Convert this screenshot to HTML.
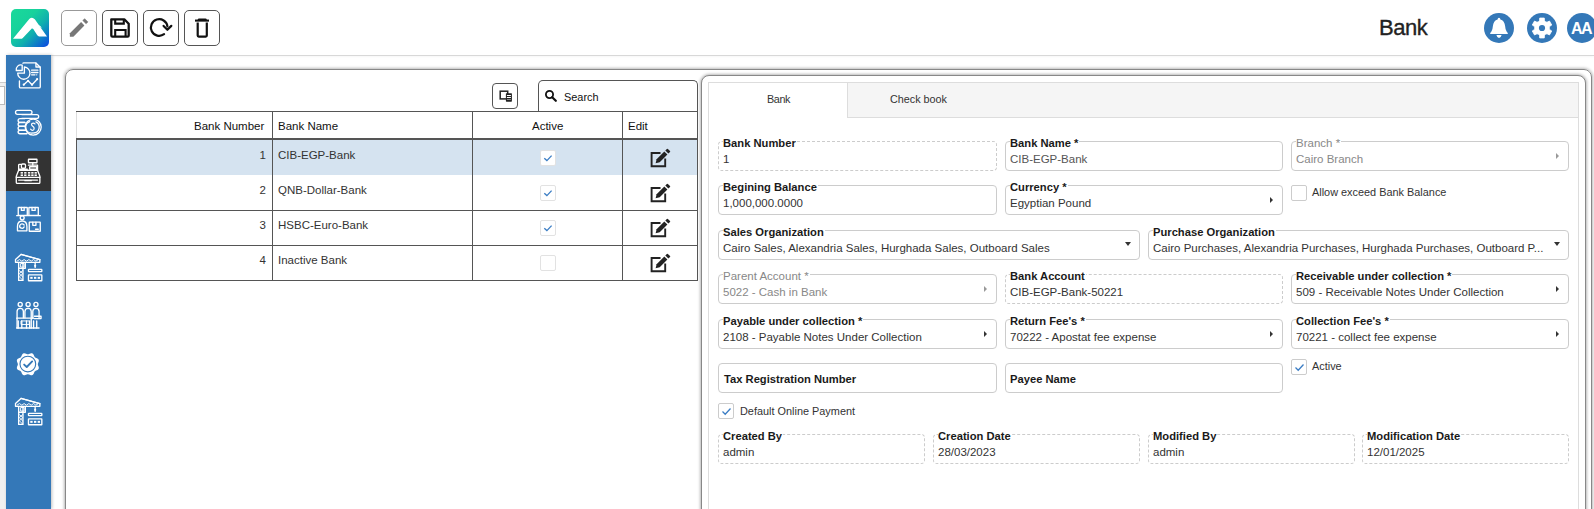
<!DOCTYPE html>
<html><head><meta charset="utf-8">
<style>
*{box-sizing:border-box;margin:0;padding:0}
html,body{width:1594px;height:509px;overflow:hidden;background:#fff;font-family:"Liberation Sans",sans-serif;color:#222}
.abs{position:absolute}
#leftstrip{left:0;top:82px;width:6px;height:427px;background:#f0f0f0;border-top:1px solid #ccc}
#leftbox{left:-2px;top:86px;width:7px;height:19px;background:#fff;border:1px solid #bbb}
#hdrline{left:51px;top:55px;width:1543px;height:1px;background:#d8d8d8;box-shadow:0 1px 2px rgba(0,0,0,.05)}
#sidebar{left:6px;top:55px;width:45px;height:454px;background:#3478b8;box-shadow:1px 0 3px rgba(0,0,0,.25)}
.sb{position:absolute;left:0;width:45px;height:40px}
.sb svg{position:absolute;left:9px;top:7px;width:26px;height:26px}
.tb{position:absolute;top:10px;width:36px;height:36px;border:1px solid #555;border-radius:5px;background:#fff}
.tb svg{position:absolute;left:0;top:0;width:34px;height:34px}
.circ{position:absolute;top:13px;width:30px;height:30px;border-radius:50%;background:#3478b8}
#outer{left:65px;top:69px;width:1527px;height:460px;border:1px solid #888;border-radius:8px;box-shadow:0 0 3px 1px rgba(0,0,0,.28)}
#rpanel{left:701px;top:75px;width:885px;height:450px;border:1px solid #888;border-radius:8px;box-shadow:0 0 3px 1px rgba(0,0,0,.28);background:#fff}
#tabs{left:708px;top:82px;width:871px;height:440px;border:1px solid #ddd}
#tabbar{left:709px;top:83px;width:869px;height:35px;background:#f5f5f5;border-bottom:1px solid #ddd}
#tabbank{left:709px;top:83px;width:139px;height:35px;background:#fff;border-right:1px solid #ddd}
.tabt{position:absolute;font-size:10.8px;color:#333;top:93px}
table.grid{position:absolute;left:76px;top:111px;border-collapse:collapse;font-size:11px}
.th{position:absolute;font-size:11.5px;color:#111}
.cell{position:absolute;font-size:11.5px;color:#333}
.vl{position:absolute;background:#555;width:1px}
.hl{position:absolute;background:#555;height:1px}
.chk{position:absolute;width:16px;height:16px;border:1px solid #ddd;border-radius:2px;background:#fff}
.chk svg{position:absolute;left:1px;top:1px}
.fld{position:absolute;height:30px;border:1px solid #ccc;border-radius:4px}
.fld.ro{border:1px dashed #ccc}
.lbl{position:absolute;font-weight:bold;font-size:11.2px;color:#1a1a1a;background:#fff;padding:0 1px 0 0;white-space:nowrap}
.val{position:absolute;font-size:11.5px;color:#333;white-space:nowrap}
.dis{color:#888}
.lbl.dis{font-weight:normal;font-size:11.5px}
.arr{position:absolute;width:0;height:0;border-top:3px solid transparent;border-bottom:3px solid transparent;border-left:3px solid #333}
.darr{position:absolute;width:0;height:0;border-left:3.5px solid transparent;border-right:3.5px solid transparent;border-top:4px solid #333}
.ckl{position:absolute;font-size:10.9px;color:#333;white-space:nowrap}
</style></head><body>

<!-- header -->
<div class="abs" style="left:11px;top:9px;width:38px;height:38px;border-radius:5px;background:linear-gradient(135deg,#1ad99a 0%,#17d29c 35%,#0fb0ae 60%,#0b45e3 100%);overflow:hidden">
<svg width="38" height="38" viewBox="0 0 38 38"><path d="M2 29.8 L18.3 10 Q21 7.3 23.8 10.3 L36 27.4 H28.2 Q26.9 27.4 26.1 26.1 L22.3 20 Q21.6 19.2 20.8 19.6 L11.8 28.9 Q11 29.8 9.6 29.8 Z" fill="#fff"/><path d="M20.3 17.9 Q25.5 13.8 30.3 18.4" stroke="#fff" stroke-width="1" fill="none"/></svg>
</div>
<div class="tb" style="left:61px;border-color:#999"><svg viewBox="0 0 34 34"><path d="M7.9 25.8 V22.3 L19.1 11.1 L22.4 14.4 L11.4 25.8 Z" fill="#777"/><path d="M20.8 9.5 L22.6 7.7 L25.9 10.9 L24.1 12.7 Z" fill="#777" stroke="#777" stroke-width=".6" stroke-linejoin="round"/></svg></div>
<div class="tb" style="left:102px"><svg viewBox="0 0 34 34"><path d="M8.3 8.3 H21.3 L25.7 12.7 V24.6 Q25.7 25.7 24.6 25.7 H9.4 Q8.3 25.7 8.3 24.6 Z" fill="none" stroke="#111" stroke-width="2.3" stroke-linejoin="round"/><path d="M12.2 8.5 V12.6 H20.8 V8.5" fill="none" stroke="#111" stroke-width="2.1"/><path d="M12.2 25.5 V19 H22.6 V25.5" fill="none" stroke="#111" stroke-width="2.1"/></svg></div>
<div class="tb" style="left:143px"><svg viewBox="0 0 34 34"><path d="M20.08 23.21 A8.3 8.3 0 1 1 23.42 15.34" fill="none" stroke="#111" stroke-width="2.2" stroke-linecap="round"/><path d="M19.6 14.9 L23.4 18.8 L27.3 14.9" fill="none" stroke="#111" stroke-width="2.2" stroke-linecap="round" stroke-linejoin="round"/></svg></div>
<div class="tb" style="left:184px"><svg viewBox="0 0 34 34"><path d="M10 9.6 H24" stroke="#111" stroke-width="2.1"/><path d="M14 8.6 H20.5" stroke="#111" stroke-width="2.4" stroke-linecap="round"/><path d="M12.7 11.5 V24.6 Q12.7 25.6 13.7 25.6 H20.8 Q21.8 25.6 21.8 24.6 V11.5" fill="none" stroke="#111" stroke-width="2.2"/></svg></div>

<div class="abs" style="left:1379px;top:15px;font-size:22px;color:#222;letter-spacing:-0.5px;-webkit-text-stroke:0.35px #222">Bank</div>
<div class="circ" style="left:1484px"><svg width="30" height="30" viewBox="0 0 30 30"><path d="M15 4.8 Q16.3 4.8 16.4 6.4 Q20.6 7.6 21.1 13 Q21.4 17 22.6 18.5 Q23.9 19.6 23.9 20.9 H6.1 Q6.1 19.6 7.4 18.5 Q8.6 17 8.9 13 Q9.4 7.6 13.6 6.4 Q13.7 4.8 15 4.8Z" fill="#fff"/><path d="M12.4 22.1 H17.6 Q17 24.9 15 24.9 Q13 24.9 12.4 22.1Z" fill="#fff"/></svg></div>
<div class="circ" style="left:1527px"><svg width="30" height="30" viewBox="0 0 30 30"><path d="M12.53 7.81 L12.71 5.06 L17.29 5.06 L17.47 7.81 Q18.50 8.94 19.99 9.26 L22.46 8.04 L24.75 12.02 L22.46 13.55 Q22.00 15.00 22.46 16.45 L24.75 17.98 L22.46 21.96 L19.99 20.74 Q18.50 21.06 17.47 22.19 L17.29 24.94 L12.71 24.94 L12.53 22.19 Q11.50 21.06 10.01 20.74 L7.54 21.96 L5.25 17.98 L7.54 16.45 Q8.00 15.00 7.54 13.55 L5.25 12.02 L7.54 8.04 L10.01 9.26 Q11.50 8.94 12.53 7.81Z" fill="#fff" stroke="#fff" stroke-width="0.8" stroke-linejoin="round"/><circle cx="15" cy="15" r="3.1" fill="#3478b8"/></svg></div>
<div class="circ" style="left:1567px"><div style="position:absolute;left:4px;top:7px;font-size:16px;font-weight:bold;color:#fff;letter-spacing:-1.6px">AA</div></div>

<div class="abs" id="hdrline"></div>
<div class="abs" id="leftstrip"></div>
<div class="abs" id="leftbox"></div>

<!-- sidebar -->
<div class="abs" id="sidebar">
 <div class="sb" style="top:0px"></div>
 <div class="sb" style="top:96px;background:#333"></div>
</div>

<svg class="abs" style="left:10px;top:56px" width="36" height="40" viewBox="0 0 458 509"><g fill="none" stroke="#fff" stroke-width="17" stroke-linejoin="round" stroke-linecap="round">
<path d="M165 92 Q165 88 175 88 H330 L385 143 V390 Q385 405 370 405 H135 Q120 405 120 390 V318"/>
<path d="M330 90 V140 H383"/>
<path d="M183 140 A78 78 0 1 1 98 218 H183 Z"/>
<path d="M155 115 A60 60 0 0 0 80 185 H155 Z"/>
<path d="M275 180 H355 M275 210 H355 M275 240 H318"/>
<path d="M175 365 L230 315 L280 365 L345 295"/>
</g><g fill="#fff"><circle cx="175" cy="365" r="14"/><circle cx="230" cy="315" r="14"/><circle cx="280" cy="365" r="14"/><circle cx="345" cy="295" r="14"/><circle cx="340" cy="240" r="9"/></g></svg>
<svg class="abs" style="left:10px;top:100px" width="36" height="40" viewBox="0 0 458 509"><g fill="none" stroke="#fff" stroke-width="17" stroke-linejoin="round" stroke-linecap="round">
<rect x="70" y="132" width="210" height="50" rx="25"/>
<path d="M150 186 H340 Q365 186 365 210 Q365 234 340 234 H150"/>
<path d="M190 236 H128 Q103 236 103 260 Q103 284 128 284 H190"/>
<path d="M190 286 H128 Q103 286 103 310 Q103 334 128 334 H190"/>
<path d="M190 336 H128 Q103 336 103 360 Q103 384 128 384 H190"/>
<path d="M200 386 H128 Q103 386 103 408 Q103 430 128 430 H215"/>
<circle cx="295" cy="345" r="102"/>
<path d="M250 275 A75 75 0 0 0 285 420" />
<path d="M330 278 A75 75 0 0 1 300 420" />
<path d="M318 305 Q300 285 280 298 Q265 315 290 335 Q318 355 300 380 Q280 395 262 372" stroke-width="15"/>
</g></svg>
<svg class="abs" style="left:10px;top:151px" width="36" height="40" viewBox="0 0 458 509"><g fill="none" stroke="#fff" stroke-width="17" stroke-linejoin="round" stroke-linecap="round">
<rect x="235" y="105" width="108" height="45" rx="4"/>
<path d="M290 152 V180"/>
<path d="M110 245 V180 Q110 170 120 170 H140 M235 180 H350 V245"/>
<rect x="145" y="165" width="52" height="55" rx="14"/>
<rect x="250" y="200" width="90" height="32" rx="3"/>
<path d="M120 232 H220"/>
<path d="M110 245 H350 L380 320 V400 Q380 412 368 412 H92 Q80 412 80 400 V320 Z"/>
<path d="M80 335 H380"/>
<path d="M110 370 H350 M190 378 H270"/>
</g><g fill="#fff"><rect x="135" y="268" width="30" height="20"/><rect x="180" y="268" width="30" height="20"/><rect x="228" y="268" width="30" height="20"/><rect x="270" y="268" width="30" height="20"/><rect x="312" y="268" width="30" height="20"/>
<rect x="135" y="298" width="30" height="20"/><rect x="180" y="298" width="30" height="20"/><rect x="228" y="298" width="30" height="20"/><rect x="270" y="298" width="30" height="20"/><rect x="312" y="298" width="30" height="20"/></g></svg>
<svg class="abs" style="left:10px;top:199px" width="36" height="40" viewBox="0 0 458 509"><g fill="none" stroke="#fff" stroke-width="17" stroke-linejoin="round" stroke-linecap="round">
<rect x="105" y="108" width="115" height="100" rx="3"/>
<rect x="240" y="108" width="120" height="100" rx="3"/>
<path d="M145 108 V145 H180 V108 M280 108 V145 H320 V108"/>
<path d="M85 212 H385"/>
<circle cx="155" cy="240" r="25"/>
<path d="M95 405 V350 Q95 280 155 280 Q215 280 215 350 V405 Z"/>
<path d="M180 330 Q150 300 125 335 Q115 370 150 370 M130 360 Q160 390 180 355"/>
<rect x="245" y="295" width="140" height="115" rx="3"/>
<path d="M290 295 V335 H330 V295 M325 385 H360"/>
</g></svg>
<svg class="abs" style="left:10px;top:247px" width="36" height="40" viewBox="0 0 458 509"><g fill="none" stroke="#fff" stroke-width="17" stroke-linejoin="round" stroke-linecap="round">
<path d="M70 195 L70 160 L140 95 L380 160 V195 Z"/>
<path d="M140 95 L380 160"/>
<path d="M90 180 L120 160 L150 180 L180 160 L210 180 L240 160 L270 180 L300 160 L330 180 L360 160" stroke-width="12"/>
<path d="M110 195 V425 H165 V195"/>
<path d="M110 270 H195 V195"/>
<path d="M120 300 L160 340 L120 380 L160 420 M160 300 L120 340 L160 380" stroke-width="12"/>
<rect x="140" y="210" width="40" height="45" stroke-width="12"/>
<path d="M320 195 V260"/>
<rect x="235" y="285" width="170" height="28" rx="6"/>
<rect x="235" y="355" width="170" height="75" rx="4"/>
</g><g fill="#fff"><circle cx="320" cy="240" r="14"/><rect x="258" y="380" width="30" height="25"/><rect x="305" y="380" width="30" height="25"/><rect x="352" y="380" width="30" height="25"/></g></svg>
<svg class="abs" style="left:10px;top:391px" width="36" height="40" viewBox="0 0 458 509"><g fill="none" stroke="#fff" stroke-width="17" stroke-linejoin="round" stroke-linecap="round">
<path d="M70 195 L70 160 L140 95 L380 160 V195 Z"/>
<path d="M140 95 L380 160"/>
<path d="M90 180 L120 160 L150 180 L180 160 L210 180 L240 160 L270 180 L300 160 L330 180 L360 160" stroke-width="12"/>
<path d="M110 195 V425 H165 V195"/>
<path d="M110 270 H195 V195"/>
<path d="M120 300 L160 340 L120 380 L160 420 M160 300 L120 340 L160 380" stroke-width="12"/>
<rect x="140" y="210" width="40" height="45" stroke-width="12"/>
<path d="M320 195 V260"/>
<rect x="235" y="285" width="170" height="28" rx="6"/>
<rect x="235" y="355" width="170" height="75" rx="4"/>
</g><g fill="#fff"><circle cx="320" cy="240" r="14"/><rect x="258" y="380" width="30" height="25"/><rect x="305" y="380" width="30" height="25"/><rect x="352" y="380" width="30" height="25"/></g></svg>
<svg class="abs" style="left:10px;top:295px" width="36" height="40" viewBox="0 0 458 509"><g fill="none" stroke="#fff" stroke-width="17" stroke-linejoin="round" stroke-linecap="round">
<circle cx="130" cy="120" r="26"/><circle cx="230" cy="120" r="26"/><circle cx="330" cy="120" r="26"/>
<path d="M90 420 V210 Q90 170 130 170 Q170 170 170 210 V290 M190 290 V210 Q190 170 230 170 Q270 170 270 210 V420"/>
<path d="M290 300 V210 Q290 170 330 170 Q370 170 370 210 V290"/>
<path d="M310 270 H395 V300 H310"/>
<path d="M85 295 H300"/>
<path d="M105 330 V420 M150 330 V420 M210 330 V420 M250 330 V420 M300 330 V420 M340 330 V420"/>
<rect x="145" y="330" width="100" height="45" stroke-width="12"/>
<path d="M85 420 H370"/>
</g></svg>
<svg class="abs" style="left:10px;top:344px" width="36" height="40" viewBox="0 0 458 509"><path fill="#fff" d="M354.0,258.0 L354.2,261.3 L354.8,264.7 L355.7,268.1 L356.9,271.7 L358.4,275.3 L359.9,279.1 L361.6,282.9 L363.1,286.9 L364.5,291.0 L365.6,295.1 L366.4,299.3 L366.7,303.4 L366.6,307.4 L365.9,311.3 L364.7,315.0 L362.9,318.5 L360.6,321.7 L357.9,324.7 L354.7,327.4 L351.3,329.8 L347.6,331.9 L343.7,333.8 L339.8,335.5 L335.9,337.1 L332.1,338.7 L328.5,340.2 L325.2,341.8 L322.1,343.6 L319.3,345.6 L316.8,347.8 L314.6,350.3 L312.6,353.1 L310.8,356.2 L309.2,359.5 L307.7,363.1 L306.1,366.9 L304.5,370.8 L302.8,374.7 L300.9,378.6 L298.8,382.3 L296.4,385.7 L293.7,388.9 L290.7,391.6 L287.5,393.9 L284.0,395.7 L280.3,396.9 L276.4,397.6 L272.4,397.7 L268.3,397.4 L264.1,396.6 L260.0,395.5 L255.9,394.1 L251.9,392.6 L248.1,390.9 L244.3,389.4 L240.7,387.9 L237.1,386.7 L233.7,385.8 L230.3,385.2 L227.0,385.0 L223.7,385.2 L220.3,385.8 L216.9,386.7 L213.3,387.9 L209.7,389.4 L205.9,390.9 L202.1,392.6 L198.1,394.1 L194.0,395.5 L189.9,396.6 L185.7,397.4 L181.6,397.7 L177.6,397.6 L173.7,396.9 L170.0,395.7 L166.5,393.9 L163.3,391.6 L160.3,388.9 L157.6,385.7 L155.2,382.3 L153.1,378.6 L151.2,374.7 L149.5,370.8 L147.9,366.9 L146.3,363.1 L144.8,359.5 L143.2,356.2 L141.4,353.1 L139.4,350.3 L137.2,347.8 L134.7,345.6 L131.9,343.6 L128.8,341.8 L125.5,340.2 L121.9,338.7 L118.1,337.1 L114.2,335.5 L110.3,333.8 L106.4,331.9 L102.7,329.8 L99.3,327.4 L96.1,324.7 L93.4,321.7 L91.1,318.5 L89.3,315.0 L88.1,311.3 L87.4,307.4 L87.3,303.4 L87.6,299.3 L88.4,295.1 L89.5,291.0 L90.9,286.9 L92.4,282.9 L94.1,279.1 L95.6,275.3 L97.1,271.7 L98.3,268.1 L99.2,264.7 L99.8,261.3 L100.0,258.0 L99.8,254.7 L99.2,251.3 L98.3,247.9 L97.1,244.3 L95.6,240.7 L94.1,236.9 L92.4,233.1 L90.9,229.1 L89.5,225.0 L88.4,220.9 L87.6,216.7 L87.3,212.6 L87.4,208.6 L88.1,204.7 L89.3,201.0 L91.1,197.5 L93.4,194.3 L96.1,191.3 L99.3,188.6 L102.7,186.3 L106.4,184.1 L110.3,182.2 L114.2,180.5 L118.1,178.9 L121.9,177.3 L125.5,175.8 L128.8,174.2 L131.9,172.4 L134.7,170.4 L137.2,168.2 L139.4,165.7 L141.4,162.9 L143.2,159.8 L144.8,156.5 L146.3,152.9 L147.9,149.1 L149.5,145.2 L151.2,141.3 L153.1,137.4 L155.2,133.7 L157.6,130.3 L160.3,127.1 L163.3,124.4 L166.5,122.1 L170.0,120.3 L173.7,119.1 L177.6,118.4 L181.6,118.3 L185.7,118.6 L189.9,119.4 L194.0,120.5 L198.1,121.9 L202.1,123.4 L205.9,125.1 L209.7,126.6 L213.3,128.1 L216.9,129.3 L220.3,130.2 L223.7,130.8 L227.0,131.0 L230.3,130.8 L233.7,130.2 L237.1,129.3 L240.7,128.1 L244.3,126.6 L248.1,125.1 L251.9,123.4 L255.9,121.9 L260.0,120.5 L264.1,119.4 L268.3,118.6 L272.4,118.3 L276.4,118.4 L280.3,119.1 L284.0,120.3 L287.5,122.1 L290.7,124.4 L293.7,127.1 L296.4,130.3 L298.8,133.7 L300.9,137.4 L302.8,141.3 L304.5,145.2 L306.1,149.1 L307.7,152.9 L309.2,156.5 L310.8,159.8 L312.6,162.9 L314.6,165.7 L316.8,168.2 L319.3,170.4 L322.1,172.4 L325.2,174.2 L328.5,175.8 L332.1,177.3 L335.9,178.9 L339.8,180.5 L343.7,182.2 L347.6,184.1 L351.3,186.2 L354.7,188.6 L357.9,191.3 L360.6,194.3 L362.9,197.5 L364.7,201.0 L365.9,204.7 L366.6,208.6 L366.7,212.6 L366.4,216.7 L365.6,220.9 L364.5,225.0 L363.1,229.1 L361.6,233.1 L359.9,236.9 L358.4,240.7 L356.9,244.3 L355.7,247.9 L354.8,251.3 L354.2,254.7 L354.0,258.0Z"/>
<circle cx="227" cy="255" r="100" fill="none" stroke="#3478b8" stroke-width="14"/>
<path d="M180 262 L213 293 L282 222" fill="none" stroke="#3478b8" stroke-width="24" stroke-linecap="round" stroke-linejoin="round"/></svg>
<!-- panels -->
<div class="abs" id="outer"></div>
<div class="abs" id="rpanel"></div>
<div class="abs" id="tabs"></div>
<div class="abs" id="tabbar"></div>
<div class="abs" id="tabbank"></div>
<div class="tabt" style="left:767px;letter-spacing:-0.4px">Bank</div>
<div class="tabt" style="left:890px">Check book</div>


<!-- left grid -->
<div class="abs" style="left:492px;top:83px;width:26px;height:26px;border:1px solid #555;border-radius:4px"><svg width="24" height="24" viewBox="0 0 24 24"><rect x="7.2" y="7.2" width="7.5" height="7.7" fill="none" stroke="#222" stroke-width="1.5"/><rect x="12.9" y="9.2" width="6" height="8.5" rx=".6" fill="#222"/><path d="M13.9 11.5h4M13.9 13.5h4" stroke="#fff" stroke-width="1"/><path d="M13.9 15.5h4" stroke="#888" stroke-width="1"/></svg></div>
<div class="abs" style="left:538px;top:80px;width:160px;height:32px;border:1px solid #555;border-bottom:none;border-radius:5px 5px 0 0"></div>
<svg class="abs" style="left:544px;top:89px" width="14" height="13" viewBox="0 0 14 13"><circle cx="5.5" cy="5.5" r="3.6" fill="none" stroke="#111" stroke-width="1.8"/><path d="M8.2 8.2 L11.8 11.8" stroke="#111" stroke-width="2.2" stroke-linecap="round"/></svg>
<div class="cell" style="left:564px;top:91px;font-size:10.9px;color:#111">Search</div>

<div class="hl" style="left:76px;top:111px;width:622px"></div>
<div class="abs" style="left:76px;top:112px;width:1px;height:27px;background:#ddd"></div>
<div class="abs" style="left:76px;top:138px;width:622px;height:2px;background:#555"></div>
<div class="abs" style="left:77px;top:140px;width:620px;height:35px;background:#d5e3f0"></div>
<div class="hl" style="left:76px;top:210px;width:622px"></div>
<div class="hl" style="left:76px;top:245px;width:622px"></div>
<div class="hl" style="left:76px;top:280px;width:622px"></div>
<div class="vl" style="left:76px;top:139px;height:142px"></div>
<div class="vl" style="left:272px;top:111px;height:170px"></div>
<div class="vl" style="left:472px;top:111px;height:170px"></div>
<div class="vl" style="left:622px;top:111px;height:170px"></div>
<div class="vl" style="left:697px;top:111px;height:170px"></div>

<div class="th" style="left:194px;top:120px">Bank Number</div>
<div class="th" style="left:278px;top:120px">Bank Name</div>
<div class="th" style="left:532px;top:120px">Active</div>
<div class="th" style="left:628px;top:120px">Edit</div>
<div class="cell" style="left:259px;top:149px;width:7px;text-align:right">1</div>
<div class="cell" style="left:278px;top:149px">CIB-EGP-Bank</div>
<div class="chk" style="left:540px;top:150px;border-color:#e2e2e2"><svg width="12" height="12" viewBox="0 0 12 12"><path d="M2.3 6.2 L4.9 8.6 L9.6 3.6" fill="none" stroke="#3b7dc4" stroke-width="1.3"/></svg></div>
<div class="abs" style="left:649px;top:148px;width:22px;height:20px"><svg width="22" height="20" viewBox="0 0 22 20"><path d="M11.5 5 H2.6 V18.3 H16.2 V10.5" fill="none" stroke="#222" stroke-width="1.9" stroke-linejoin="miter"/><path d="M6.6 15.2 L7.6 11.2 L15.3 3.5 L18.4 6.6 L10.7 14.3 Z" fill="#222"/><path d="M16.3 2.5 L17.9 0.9 Q18.4 0.4 18.9 0.9 L21 3 Q21.5 3.5 21 4 L19.4 5.6 Z" fill="#222"/></svg></div>
<div class="cell" style="left:259px;top:184px;width:7px;text-align:right">2</div>
<div class="cell" style="left:278px;top:184px">QNB-Dollar-Bank</div>
<div class="chk" style="left:540px;top:185px;border-color:#e2e2e2"><svg width="12" height="12" viewBox="0 0 12 12"><path d="M2.3 6.2 L4.9 8.6 L9.6 3.6" fill="none" stroke="#3b7dc4" stroke-width="1.3"/></svg></div>
<div class="abs" style="left:649px;top:183px;width:22px;height:20px"><svg width="22" height="20" viewBox="0 0 22 20"><path d="M11.5 5 H2.6 V18.3 H16.2 V10.5" fill="none" stroke="#222" stroke-width="1.9" stroke-linejoin="miter"/><path d="M6.6 15.2 L7.6 11.2 L15.3 3.5 L18.4 6.6 L10.7 14.3 Z" fill="#222"/><path d="M16.3 2.5 L17.9 0.9 Q18.4 0.4 18.9 0.9 L21 3 Q21.5 3.5 21 4 L19.4 5.6 Z" fill="#222"/></svg></div>
<div class="cell" style="left:259px;top:219px;width:7px;text-align:right">3</div>
<div class="cell" style="left:278px;top:219px">HSBC-Euro-Bank</div>
<div class="chk" style="left:540px;top:220px;border-color:#e2e2e2"><svg width="12" height="12" viewBox="0 0 12 12"><path d="M2.3 6.2 L4.9 8.6 L9.6 3.6" fill="none" stroke="#3b7dc4" stroke-width="1.3"/></svg></div>
<div class="abs" style="left:649px;top:218px;width:22px;height:20px"><svg width="22" height="20" viewBox="0 0 22 20"><path d="M11.5 5 H2.6 V18.3 H16.2 V10.5" fill="none" stroke="#222" stroke-width="1.9" stroke-linejoin="miter"/><path d="M6.6 15.2 L7.6 11.2 L15.3 3.5 L18.4 6.6 L10.7 14.3 Z" fill="#222"/><path d="M16.3 2.5 L17.9 0.9 Q18.4 0.4 18.9 0.9 L21 3 Q21.5 3.5 21 4 L19.4 5.6 Z" fill="#222"/></svg></div>
<div class="cell" style="left:259px;top:254px;width:7px;text-align:right">4</div>
<div class="cell" style="left:278px;top:254px">Inactive Bank</div>
<div class="chk" style="left:540px;top:255px;border-color:#e2e2e2"></div>
<div class="abs" style="left:649px;top:253px;width:22px;height:20px"><svg width="22" height="20" viewBox="0 0 22 20"><path d="M11.5 5 H2.6 V18.3 H16.2 V10.5" fill="none" stroke="#222" stroke-width="1.9" stroke-linejoin="miter"/><path d="M6.6 15.2 L7.6 11.2 L15.3 3.5 L18.4 6.6 L10.7 14.3 Z" fill="#222"/><path d="M16.3 2.5 L17.9 0.9 Q18.4 0.4 18.9 0.9 L21 3 Q21.5 3.5 21 4 L19.4 5.6 Z" fill="#222"/></svg></div>

<!-- form -->
<div class="fld ro" style="left:718px;top:141px;width:279px;height:30px"></div>
<div class="lbl" style="left:723px;top:137px">Bank Number</div>
<div class="val" style="left:723px;top:153px">1</div>
<div class="fld" style="left:1005px;top:141px;width:278px;height:30px"></div>
<div class="lbl" style="left:1010px;top:137px">Bank Name *</div>
<div class="val" style="left:1010px;top:153px"><span style="color:#555">CIB-EGP-Bank</span></div>
<div class="fld" style="left:1291px;top:141px;width:278px;height:30px"></div>
<div class="lbl dis" style="left:1296px;top:137px">Branch *</div>
<div class="val dis" style="left:1296px;top:153px">Cairo Branch</div>
<div class="arr" style="left:1556px;top:153px;border-left-color:#999"></div>
<div class="fld" style="left:718px;top:185px;width:279px;height:30px"></div>
<div class="lbl" style="left:723px;top:181px">Begining Balance</div>
<div class="val" style="left:723px;top:197px">1,000,000.0000</div>
<div class="fld" style="left:1005px;top:185px;width:278px;height:30px"></div>
<div class="lbl" style="left:1010px;top:181px">Currency *</div>
<div class="val" style="left:1010px;top:197px">Egyptian Pound</div>
<div class="arr" style="left:1270px;top:197px;border-left-color:#333"></div>
<div class="chk" style="left:1291px;top:185px;border-color:#ccc"></div><div class="ckl" style="left:1312px;top:186px">Allow exceed Bank Balance</div>
<div class="fld" style="left:718px;top:230px;width:422px;height:30px"></div>
<div class="lbl" style="left:723px;top:226px">Sales Organization</div>
<div class="val" style="left:723px;top:242px">Cairo Sales, Alexandria Sales, Hurghada Sales, Outboard Sales</div>
<div class="darr" style="left:1125px;top:242px"></div>
<div class="fld" style="left:1148px;top:230px;width:421px;height:30px"></div>
<div class="lbl" style="left:1153px;top:226px">Purchase Organization</div>
<div class="val" style="left:1153px;top:242px">Cairo Purchases, Alexandria Purchases, Hurghada Purchases, Outboard P...</div>
<div class="darr" style="left:1554px;top:242px"></div>
<div class="fld" style="left:718px;top:274px;width:279px;height:30px"></div>
<div class="lbl dis" style="left:723px;top:270px">Parent Account *</div>
<div class="val dis" style="left:723px;top:286px">5022 - Cash in Bank</div>
<div class="arr" style="left:984px;top:286px;border-left-color:#999"></div>
<div class="fld ro" style="left:1005px;top:274px;width:278px;height:30px"></div>
<div class="lbl" style="left:1010px;top:270px">Bank Account</div>
<div class="val" style="left:1010px;top:286px">CIB-EGP-Bank-50221</div>
<div class="fld" style="left:1291px;top:274px;width:278px;height:30px"></div>
<div class="lbl" style="left:1296px;top:270px">Receivable under collection *</div>
<div class="val" style="left:1296px;top:286px">509 - Receivable Notes Under Collection</div>
<div class="arr" style="left:1556px;top:286px;border-left-color:#333"></div>
<div class="fld" style="left:718px;top:319px;width:279px;height:30px"></div>
<div class="lbl" style="left:723px;top:315px">Payable under collection *</div>
<div class="val" style="left:723px;top:331px">2108 - Payable Notes Under Collection</div>
<div class="arr" style="left:984px;top:331px;border-left-color:#333"></div>
<div class="fld" style="left:1005px;top:319px;width:278px;height:30px"></div>
<div class="lbl" style="left:1010px;top:315px">Return Fee's *</div>
<div class="val" style="left:1010px;top:331px">70222 - Apostat fee expense</div>
<div class="arr" style="left:1270px;top:331px;border-left-color:#333"></div>
<div class="fld" style="left:1291px;top:319px;width:278px;height:30px"></div>
<div class="lbl" style="left:1296px;top:315px">Collection Fee's *</div>
<div class="val" style="left:1296px;top:331px">70221 - collect fee expense</div>
<div class="arr" style="left:1556px;top:331px;border-left-color:#333"></div>
<div class="fld" style="left:718px;top:363px;width:279px;height:30px"></div><div class="lbl" style="left:724px;top:373px;background:none">Tax Registration Number</div>
<div class="fld" style="left:1005px;top:363px;width:278px;height:30px"></div><div class="lbl" style="left:1010px;top:373px;background:none">Payee Name</div>
<div class="chk" style="left:1291px;top:359px;border-color:#ccc"><svg width="13" height="13" viewBox="0 0 13 13"><path d="M2.5 6.5 L5.2 9.2 L10.5 3.5" fill="none" stroke="#3b7dc4" stroke-width="1.3"/></svg></div><div class="ckl" style="left:1312px;top:360px">Active</div>
<div class="chk" style="left:718px;top:403px;border-color:#ccc"><svg width="13" height="13" viewBox="0 0 13 13"><path d="M2.5 6.5 L5.2 9.2 L10.5 3.5" fill="none" stroke="#3b7dc4" stroke-width="1.3"/></svg></div><div class="ckl" style="left:740px;top:405px">Default Online Payment</div>
<div class="fld ro" style="left:718px;top:434px;width:207px;height:30px"></div>
<div class="lbl" style="left:723px;top:430px">Created By</div>
<div class="val" style="left:723px;top:446px">admin</div>
<div class="fld ro" style="left:933px;top:434px;width:207px;height:30px"></div>
<div class="lbl" style="left:938px;top:430px">Creation Date</div>
<div class="val" style="left:938px;top:446px">28/03/2023</div>
<div class="fld ro" style="left:1148px;top:434px;width:207px;height:30px"></div>
<div class="lbl" style="left:1153px;top:430px">Modified By</div>
<div class="val" style="left:1153px;top:446px">admin</div>
<div class="fld ro" style="left:1362px;top:434px;width:207px;height:30px"></div>
<div class="lbl" style="left:1367px;top:430px">Modification Date</div>
<div class="val" style="left:1367px;top:446px">12/01/2025</div>
</body></html>
